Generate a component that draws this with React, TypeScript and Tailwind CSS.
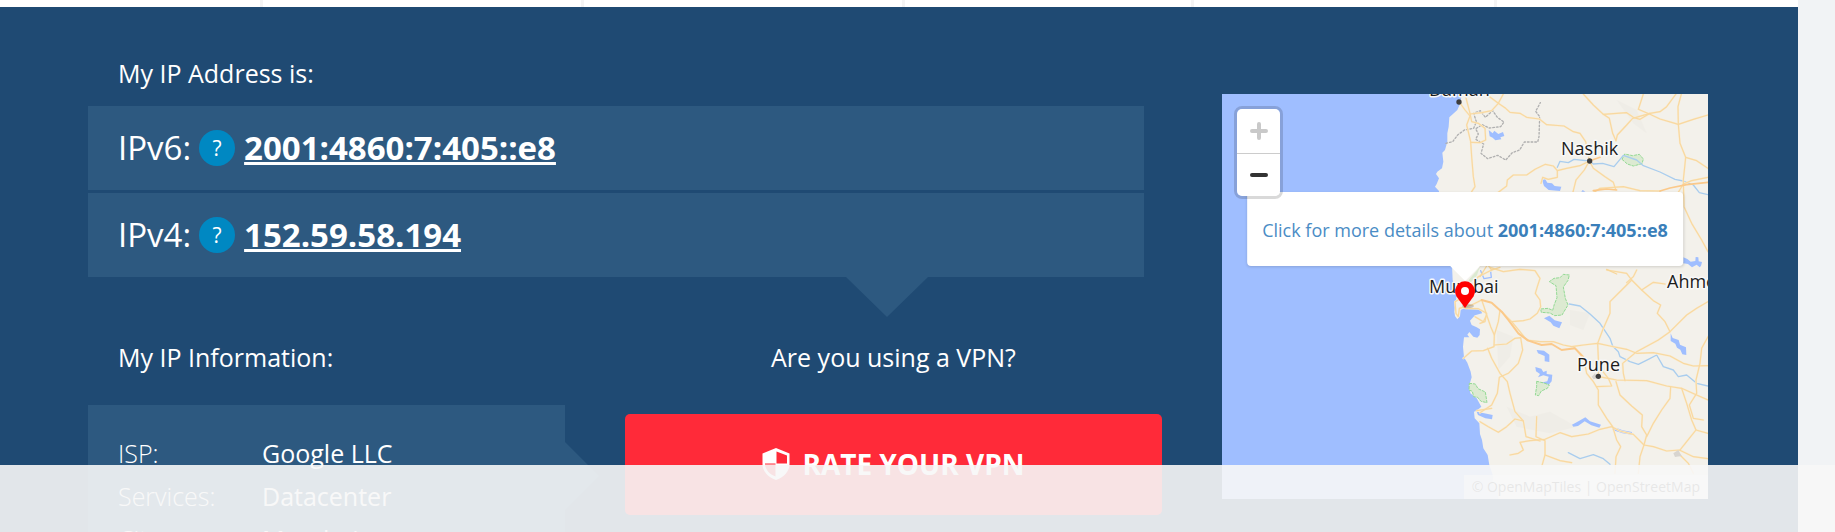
import React from "react";

const FONT = "font-['Open_Sans','Noto_Sans',sans-serif]";

function ShieldIcon() {
  return (
    <svg className="h-8 w-7 shrink-0" viewBox="0 0 28 32" fill="none" aria-hidden="true">
      <path
        d="M14 0 27.500 5.500V16c0 7-5 13-13.500 16C5.500 29 .5 23 .5 16V5.500Z"
        fill="#fff"
      />
      <path d="M14.500 3.500V15.500H25V7.500ZM3 16.500c.6 5.500 4.500 9.700 10.500 12V16.500Z" fill="#ff2a39" />
      <path d="M3 15.700H13.500" stroke="#ff2a39" strokeWidth="1" opacity=".6" />
    </svg>
  );
}

function IpRow({ label, value }: { label: string; value: string }) {
  return (
    <div className="flex h-21 items-center bg-[#2d5980] px-[30px] text-[33px] leading-[44px]">
      <span>{label}</span>
      <button
        type="button"
        aria-label={`What is ${label.replace(":", "")}?`}
        className="ml-2 h-9 w-9 rounded-full bg-[#0088c2] text-[21px] leading-9"
      >
        ?
      </button>
      <a href="#details" className="ml-[9px] font-bold underline">
        {value}
      </a>
    </div>
  );
}

const info = [
  ["ISP:", "Google LLC"],
  ["Services:", "Datacenter"],
  ["City:", "Mumbai"],
];

const upperRoads = [
  "M118 66 135 90 150 108 140 135 152 185 155 230 160 290 165 320 155 335",
  "M135 42 150 100 155 125 175 130 195 145 197 180 180 188 152 187",
  "M197 42 215 55 235 70 257 85 270 97 300 100 320 112 358 117 380 134 432 138 460 155 480 160 497 185 508 243",
  "M250 42 235 70 215 92 185 98 150 102",
  "M490 42 520 75 550 103 568 115 578 160 588 182",
  "M550 103 620 98 640 112 660 118 690 100 720 95 740 80 768 42",
  "M670 42 655 88 690 103 720 117 775 133 820 118 864 105",
  "M588 182 592 165 620 135 638 115 690 100",
  "M784 42 774 80 775 133 780 190 797 232 790 300 792 380 815 430 845 480 864 515",
  "M797 232 830 242 864 265",
  "M508 243 480 257 440 265 412 272 400 258 376 253 345 268 320 285 280 285 262 300 260 318 235 337",
  "M412 272 412 292 385 298 368 292 363 310",
  "M508 243 493 270 468 300 458 340",
  "M508 243 520 265 555 290 580 307 587 328",
  "M864 292 815 302 790 312 770 345",
  "M720 333 660 332 610 320 540 325 510 345",
];

const lowerRoads = [
  "M210 -8 250 5 300 -2 345 2 360 25 352 50 346 70 360 90 362 110 352 130 330 147 310 152 275 155 245 125",
  "M215 0 175 20 160 40 150 70 105 95 108 130 115 140 118 115 155 105 185 90 192 110 200 135 190 155 165 140",
  "M135 115 175 116 200 130 195 155 180 160",
  "M200 135 212 170 223 195 222 230 190 242 155 243 130 265",
  "M203 235 215 265 240 310 262 335 270 370 285 425 310 453 318 500 360 513",
  "M223 225 260 222 285 205 302 203 308 240 295 280 265 310 238 322 232 370 215 405 180 428",
  "M240 120 235 155 223 195",
  "M275 155 300 185 320 210 360 215 400 215 430 225 455 230 490 225 533 220 570 228 620 238 650 250 700 248 750 258 790 280 820 288 864 287",
  "M560 0 620 10 635 30 665 60 700 92 722 105 712 130 735 155 750 185 765 170 800 135 830 115 864 95",
  "M635 30 605 60 570 95 570 130 548 180 533 220 535 265 535 320",
  "M650 0 640 20 620 38",
  "M665 60 700 37 735 42",
  "M750 185 715 210 650 245 608 280 610 310 615 332",
  "M460 230 490 260 500 310 520 335 535 360 535 405 560 445 578 470 590 510 602 530 588 560 585 610",
  "M535 320 565 325 590 330 680 332 740 348 785 355 830 375 864 390",
  "M545 300 565 325 575 348 530 350",
  "M588 335 600 375 635 408 667 435 665 470 680 495 672 525 660 560 655 610",
  "M752 350 750 385 725 420 700 460 680 500",
  "M785 355 800 400 815 450 828 480 800 515 780 540",
  "M864 200 845 235 840 280 828 330 830 370 808 405 820 445 850 450",
  "M828 480 864 490",
  "M672 525 700 530 740 543 778 540 820 560 864 566",
  "M780 555 805 580 820 610",
  "M180 455 205 470 235 487 260 470 285 447 310 453",
  "M270 555 295 550 310 540 300 517 330 512 375 508 420 488 455 500 505 492 540 478 575 470 600 483 640 493 672 525",
  "M350 440 348 500 375 512 375 555 420 572 455 578",
  "M375 555 365 590",
  "M170 422 215 415",
];

const cities = [
  { x: 207, y: 2, text: "Daman" },
  { x: 339, y: 61, text: "Nashik" },
  { x: 207, y: 199, text: "Mumbai" },
  { x: 445, y: 194, text: "Ahmednagar" },
  { x: 355, y: 277, text: "Pune" },
];

function MapDrawing() {
  return (
    <svg
      className="block h-full w-full"
      viewBox="0 0 486 405"
      preserveAspectRatio="xMidYMid slice"
      aria-label="Map around Mumbai"
    >
      <rect width="486" height="405" fill="#9fbeff" />
      <g
        transform="translate(198 -14) scale(.333333)"
        strokeLinejoin="round"
        strokeLinecap="round"
        fill="none"
      >
        <path
          fill="#f3f1eb"
          d="M128 30 120 72 112 90 98 103 88 112 86 140 82 160 82 185 75 210 67 218 70 245 66 265 52 275 48 282 57 295 50 312 45 320 57 333 60 400 90 520 96 555 98 600 110 640 108 665 103 695 105 708 112 718 120 708 122 690 135 684 160 686 183 688 186 700 165 706 150 722 155 735 170 742 180 748 179 765 172 773 160 770 148 756 142 764 148 772 132 772 129 800 132 832 142 848 152 875 155 892 148 915 151 940 170 955 184 980 170 992 162 995 164 1015 178 1030 180 1062 186 1080 190 1105 203 1125 208 1155 220 1190 218 1210 235 1230 235 1270H880V30Z"
        />
        <g fill="#e9e6df" opacity=".3">
          <path d="M265 350 350 370 430 350 470 400 390 430 300 410Z" />
          <path d="M260 980 330 1010 390 995 470 1040 390 1060 290 1040Z" />
          <path d="M230 750 280 770 270 830 235 870Z" />
          <path d="M590 60 650 90 680 160 640 130Z" />
          <path d="M450 690 510 700 490 750 450 735Z" />
        </g>
        <g fill="#9fbeff">
          <path d="m206 150 12 10 5-8 12 10 14-6 4 12-12 4 3 6-18 3-8-8-9-4Z" />
          <path d="m366 300 10-2 6 10 14 2 8 8 20 2-4 13-34-3-14-12Z" />
          <path d="m790 532 12 5 10 8 14-2 1-12 8 1 1 12 10 2-3 12-4 4-9-8-14 8-12-10-14-2Z" />
          <path d="m372 715 16-8 16 14 22 6-8 18-18-8-8-10Z" />
          <path d="m350 810 22 2 16 12v22l-14-2v-16l-20-8Z" />
          <path d="m346 861 18 5 6 10 10-4 0 10 17 2-2 20-12 14-17-2-4-8 20-4 4-14-16-4-16 6 6-10-12-8Z" />
          <path d="m752 760 6 14 18 6 4 14 18 8 1 23-12-2-6-14-10-6-5-12-14-8Z" />
          <path d="m456 1034 22-12 18-10 14 12 33 10-5 9-24-7-20-12-20 14-14 2Z" />
          <path d="m578 1042 18 4 12 5 28 5v8l-28-4-14-5-16-5Z" />
          <path d="m170 995 30 6 18 4-2 13-20-3-22-10Z" />
          <path d="m488 330 8 5h-12Z" />
        </g>
        <g fill="#dcead1" stroke="#93d994" strokeWidth="3" strokeDasharray="7 5">
          <path d="m606 238 8-16 24 5 20-4 12 14-4 14-26 7-18-6Z" />
          <path d="m388 605 14-10 18-2 10-10 18 2-4 16-14 20 6 34 8 20-18 30-22 2-14-8-26-2-2-10 22-2 14 6 5-18 8-20-3-36Z" />
          <path d="m148 910 18 2 8 14 22 10 5 32-18-4-10-12-12-2-4-16-10-4Z" />
          <path d="m350 904 22 5 16 6-6 10-18 8-8 14-10-2 4-26Z" />
        </g>
        <path d="M146 600 180 560 170 588 150 610Z" fill="#dcead1" />
        <path d="M182 572 192 596 214 592 212 575" stroke="#9fbeff" strokeWidth="4" />
        <g stroke="#a9cdee" strokeWidth="4">
          <path d="M412 262 420 244 445 248 462 238 508 243 520 252 548 250 582 260 610 226 650 240 670 257 720 276 765 298 790 303 820 315 838 338 864 344" />
          <path d="M448 672 480 678 510 702 540 730 570 775 578 798 595 815 600 830 630 845 655 853 685 838 710 825 730 860 760 870 775 890 800 885 830 910 864 918" />
          <path d="M445 1118 480 1136 520 1124 550 1136 570 1153" />
        </g>
        <path
          d="m78 190 20-5 15-20 20-15 28-5 8-20-8-25 20-8 15 20 22-20 14 20 20 14-10 14-35 4-20-10-20 12 8 16-8 16 24 14-8 28 20 16 30-10 24 14 20-22 22-8 14-24h40l4-16 2-60-12-16 14-26"
          stroke="#b0b0b0"
          strokeWidth="4"
          strokeDasharray="5 6"
        />
        <g stroke="#f9ecd2" strokeWidth="6">
          {upperRoads.map((d) => <path key={d} d={d} />)}
        </g>
        <g stroke="#f8d8a0" strokeWidth="3.500">
          {upperRoads.map((d) => <path key={d} d={d} />)}
        </g>
        <g transform="translate(0 570)">
          <g stroke="#f9ecd2" strokeWidth="6">
            {lowerRoads.map((d) => <path key={d} d={d} />)}
          </g>
          <g stroke="#f8d8a0" strokeWidth="3.500">
            {lowerRoads.map((d) => <path key={d} d={d} />)}
          </g>
          <path
            d="M185 90 215 98 245 125 265 150 295 190 325 212 365 225 395 222 425 240 465 235 490 262"
            stroke="#fbc98a"
            strokeWidth="6"
          />
          <path d="M170 -10 200 -20 215 0 240 -8M180 20 200 -12M560 -2 590 12" stroke="#f7d79b" strokeWidth="4" />
          <path d="m760 550 15-10 10 18-20 3ZM515 320l10-10 8 14-12 4Z" fill="#d8d5d0" />
        </g>
        <path d="M864 307 800 314 750 324 720 333M520 332 560 327 590 330M508 243 540 232" stroke="#fbc98a" strokeWidth="5" />
        <g fill="#3d3d3d">
          <circle cx="117" cy="66" r="8" />
          <circle cx="509" cy="243" r="8" />
          <circle cx="535" cy="889" r="8" />
        </g>
      </g>
      <g
        className="font-['Open_Sans','Noto_Sans',sans-serif] text-[18px]"
        fill="#1c1c1c"
        stroke="#f8f8f8"
        strokeWidth="3"
        strokeLinejoin="round"
        paintOrder="stroke"
      >
        {cities.map((c) => (
          <text key={c.text} x={c.x} y={c.y}>{c.text}</text>
        ))}
      </g>
      <ellipse cx="246" cy="212" rx="6" ry="2" fill="#000" opacity=".18" />
      <path d="M243 214 234.500 202.500A10 10 0 1 1 251.500 202.500Z" fill="#f00" />
      <circle cx="243" cy="197" r="4" fill="#fff" />
    </svg>
  );
}

function MapPanel() {
  return (
    <div className="relative h-[405px] overflow-hidden">
      <MapDrawing />
      <a
        href="#details"
        className="absolute top-[98px] left-1/2 flex h-[74px] -translate-x-1/2 items-center rounded bg-white px-[15px] pt-0.5 text-lg whitespace-nowrap text-[#4a8cc5] shadow-[0_1px_3px_rgba(0,0,0,0.15)]"
      >
        <span>
          Click for more details about <b className="font-bold text-[#3a7fba]">2001:4860:7:405::e8</b>
        </span>
        <svg className="absolute top-full left-1/2 h-[15px] w-[30px] -translate-x-1/2" viewBox="0 0 30 15" aria-hidden="true">
          <path d="M0 0H30L15 15Z" fill="#fff" />
        </svg>
      </a>
      <div className="absolute top-3 left-3 flex w-[49px] flex-col rounded-lg border-3 border-black/15 bg-clip-padding">
        <button type="button" aria-label="Zoom in" className="flex h-[45px] items-center justify-center rounded-t-[5px] border-b border-[#ccc] bg-white">
          <svg className="h-5 w-5" viewBox="0 0 20 20" stroke="#c9c9c9" strokeWidth="4" strokeLinecap="round" aria-hidden="true">
            <path d="M3 10H17M10 3V17" />
          </svg>
        </button>
        <button type="button" aria-label="Zoom out" className="flex h-[42px] items-center justify-center rounded-b-[5px] bg-white">
          <svg className="h-5 w-5" viewBox="0 0 20 20" stroke="#333" strokeWidth="4" strokeLinecap="round" aria-hidden="true">
            <path d="M3 10H17" />
          </svg>
        </button>
      </div>
      <div className="absolute right-0 bottom-0 h-6 bg-white/70 px-2 text-sm leading-6 whitespace-nowrap text-[#555]">
        <a href="#tiles">© OpenMapTiles</a> | <a href="#osm">OpenStreetMap</a>
      </div>
    </div>
  );
}

export default function App() {
  return (
    <div className={`flex h-screen overflow-hidden bg-[#f1f3f5] pr-[37px] text-white ${FONT}`}>
      <div className="min-w-0 flex-1">
        <nav className="flex h-[7px] bg-white" aria-label="Main">
          <div className="flex-[260] border-r-3 border-[#f4f4f4]" />
          <div className="flex-[318] border-r-3 border-[#f4f4f4]" />
          <div className="flex-[318] border-r-3 border-[#f4f4f4]" />
          <div className="flex-[286] border-r-3 border-[#f4f4f4]" />
          <div className="flex-[300] border-r-3 border-[#f4f4f4]" />
          <div className="flex-[301]" />
        </nav>
        <main className="flex min-h-screen gap-[60px] bg-[#1f4a73] pr-[90px] pl-22">
          <div className="min-w-0 flex-[1074] pt-[46px]">
            <h2 className="mb-[13px] pl-[30px] text-[25px] leading-10">My IP Address is:</h2>
            <div className="relative mr-[18px] flex flex-col gap-[3px]">
              <IpRow label="IPv6:" value="2001:4860:7:405::e8" />
              <IpRow label="IPv4:" value="152.59.58.194" />
              <svg className="absolute top-full right-[216px] h-10 w-[82px]" viewBox="0 0 82 40" aria-hidden="true">
                <path d="M0 0H82L41 40Z" fill="#2d5980" />
              </svg>
            </div>
            <div className="flex gap-[60px] pt-[60px]">
              <section className="min-w-0 flex-[477]">
                <h2 className="pl-[30px] text-[25px] leading-10">My IP Information:</h2>
                <div className="relative mt-7 bg-[#2d5980] px-[30px] pt-[27px] pb-8">
                  <table className="w-full table-fixed text-left text-[25px] leading-[43px]">
                    <tbody>
                      {info.map(([k, v]) => (
                        <tr key={k}>
                          <th scope="row" className="w-36 p-0 font-light">{k}</th>
                          <td className="p-0">{v}</td>
                        </tr>
                      ))}
                    </tbody>
                  </table>
                  <svg className="absolute top-[37px] left-full h-[68px] w-[34px]" viewBox="0 0 34 68" aria-hidden="true">
                    <path d="M0 0V68L34 34Z" fill="#2d5980" />
                  </svg>
                </div>
              </section>
              <section className="min-w-0 flex-[537]">
                <h2 className="text-center text-[25px] leading-10">Are you using a VPN?</h2>
                <button
                  type="button"
                  className="mt-[37px] flex h-[101px] w-full items-center justify-center gap-3 rounded-[5px] bg-[#ff2a39] pb-0.5 text-[28px] font-bold"
                >
                  <ShieldIcon />
                  RATE YOUR VPN
                </button>
              </section>
            </div>
          </div>
          <div className="min-w-0 flex-[486] pt-[87px]">
            <MapPanel />
          </div>
        </main>
      </div>
      <aside className="fixed inset-x-0 bottom-0 h-[67px] bg-[#f7f7f7]/90" aria-label="Notice" />
    </div>
  );
}
